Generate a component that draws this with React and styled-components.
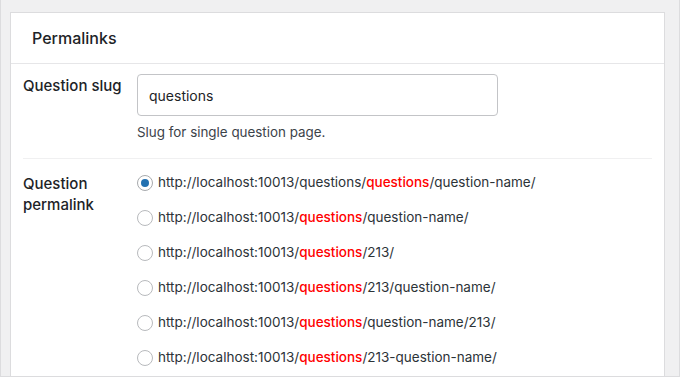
import React, { useState } from 'react';
import styled, { createGlobalStyle } from 'styled-components';

const GlobalStyle = createGlobalStyle`
  html, body {
    margin: 0;
    padding: 0;
  }
  body {
    font-family: Inter, "Liberation Sans", Arial, sans-serif;
    color: #1d2327;
  }
`;

const Page = styled.div`
  box-sizing: border-box;
  width: 680px;
  height: 377px;
  overflow: hidden;
  background: #f0f0f1;
  border: 1px solid #dcdcde;
  border-top: none;
  padding: 12px 14px 0 9px;
`;

const Card = styled.div`
  background: #fff;
  border: 1px solid #dcdcde;
  border-bottom: none;
  height: 100%;
  box-sizing: border-box;
`;

const CardHeader = styled.div`
  height: 50px;
  display: flex;
  align-items: center;
  padding-left: 21px;
  border-bottom: 1px solid #e6e6e8;
`;

const Title = styled.h2`
  margin: 0;
  font-size: 16px;
  font-weight: 500;
  color: #1d2327;
`;

const CardBody = styled.div`
  padding: 0 12px 0 12px;
`;

const Row = styled.div`
  display: grid;
  grid-template-columns: 114px 1fr;
  padding: ${p => p.$pad};
  border-top: ${p => (p.$divider ? '1px solid #f0f0f1' : 'none')};
`;

const Label = styled.label`
  font-size: 15px;
  font-weight: 500;
  line-height: 21px;
  color: #1d2327;
  padding-top: ${p => p.$top || 0}px;
`;

const Field = styled.div`
  display: flex;
  flex-direction: column;
`;

const Input = styled.input`
  box-sizing: border-box;
  width: 361px;
  height: 42px;
  padding: 0 11px;
  border: 1px solid #c3c4c7;
  border-radius: 4px;
  font-family: inherit;
  font-size: 14px;
  color: #1d2327;
  outline: none;
`;

const Description = styled.p`
  margin: 7px 0 0;
  font-size: 13.4px;
  line-height: 18px;
  color: #3c434a;
`;

const RadioList = styled.div`
  display: flex;
  flex-direction: column;
  gap: 14px;
`;

const Option = styled.label`
  display: flex;
  align-items: center;
  gap: 5px;
  font-size: 13.5px;
  line-height: 21px;
  color: #2c3338;
  cursor: pointer;
`;

const Radio = styled.span`
  box-sizing: border-box;
  width: 16px;
  height: 16px;
  border-radius: 50%;
  border: 1px solid ${p => (p.$checked ? '#a7aaad' : '#b8babd')};
  display: flex;
  align-items: center;
  justify-content: center;
  flex-shrink: 0;

  &::after {
    content: '';
    width: 8px;
    height: 8px;
    border-radius: 50%;
    background: #2271b1;
    display: ${p => (p.$checked ? 'block' : 'none')};
  }
`;

const Slug = styled.span`
  color: #f00;
  font-weight: 500;
`;

const base = 'http://localhost:10013/';
const options = [
  { pre: 'questions/', rest: '/question-name/' },
  { pre: '', rest: '/question-name/' },
  { pre: '', rest: '/213/' },
  { pre: '', rest: '/213/question-name/' },
  { pre: '', rest: '/question-name/213/' },
  { pre: '', rest: '/213-question-name/' },
];

export default function App() {
  const [slug, setSlug] = useState('questions');
  const [selected, setSelected] = useState(0);

  return (
    <>
      <GlobalStyle />
      <Page>
        <Card>
          <CardHeader>
            <Title>Permalinks</Title>
          </CardHeader>
          <CardBody>
            <Row $pad="10px 0 17px">
              <Label $top={1}>Question slug</Label>
              <Field>
                <Input value={slug} onChange={e => setSlug(e.target.value)} />
                <Description>Slug for single question page.</Description>
              </Field>
            </Row>
            <Row $divider $pad="13px 0 0">
              <Label $top={1}>Question<br />permalink</Label>
              <RadioList>
                {options.map((o, i) => (
                  <Option key={i} onClick={() => setSelected(i)}>
                    <Radio $checked={selected === i} />
                    <span>
                      {base}{o.pre}<Slug>{slug}</Slug>{o.rest}
                    </span>
                  </Option>
                ))}
              </RadioList>
            </Row>
          </CardBody>
        </Card>
      </Page>
    </>
  );
}
